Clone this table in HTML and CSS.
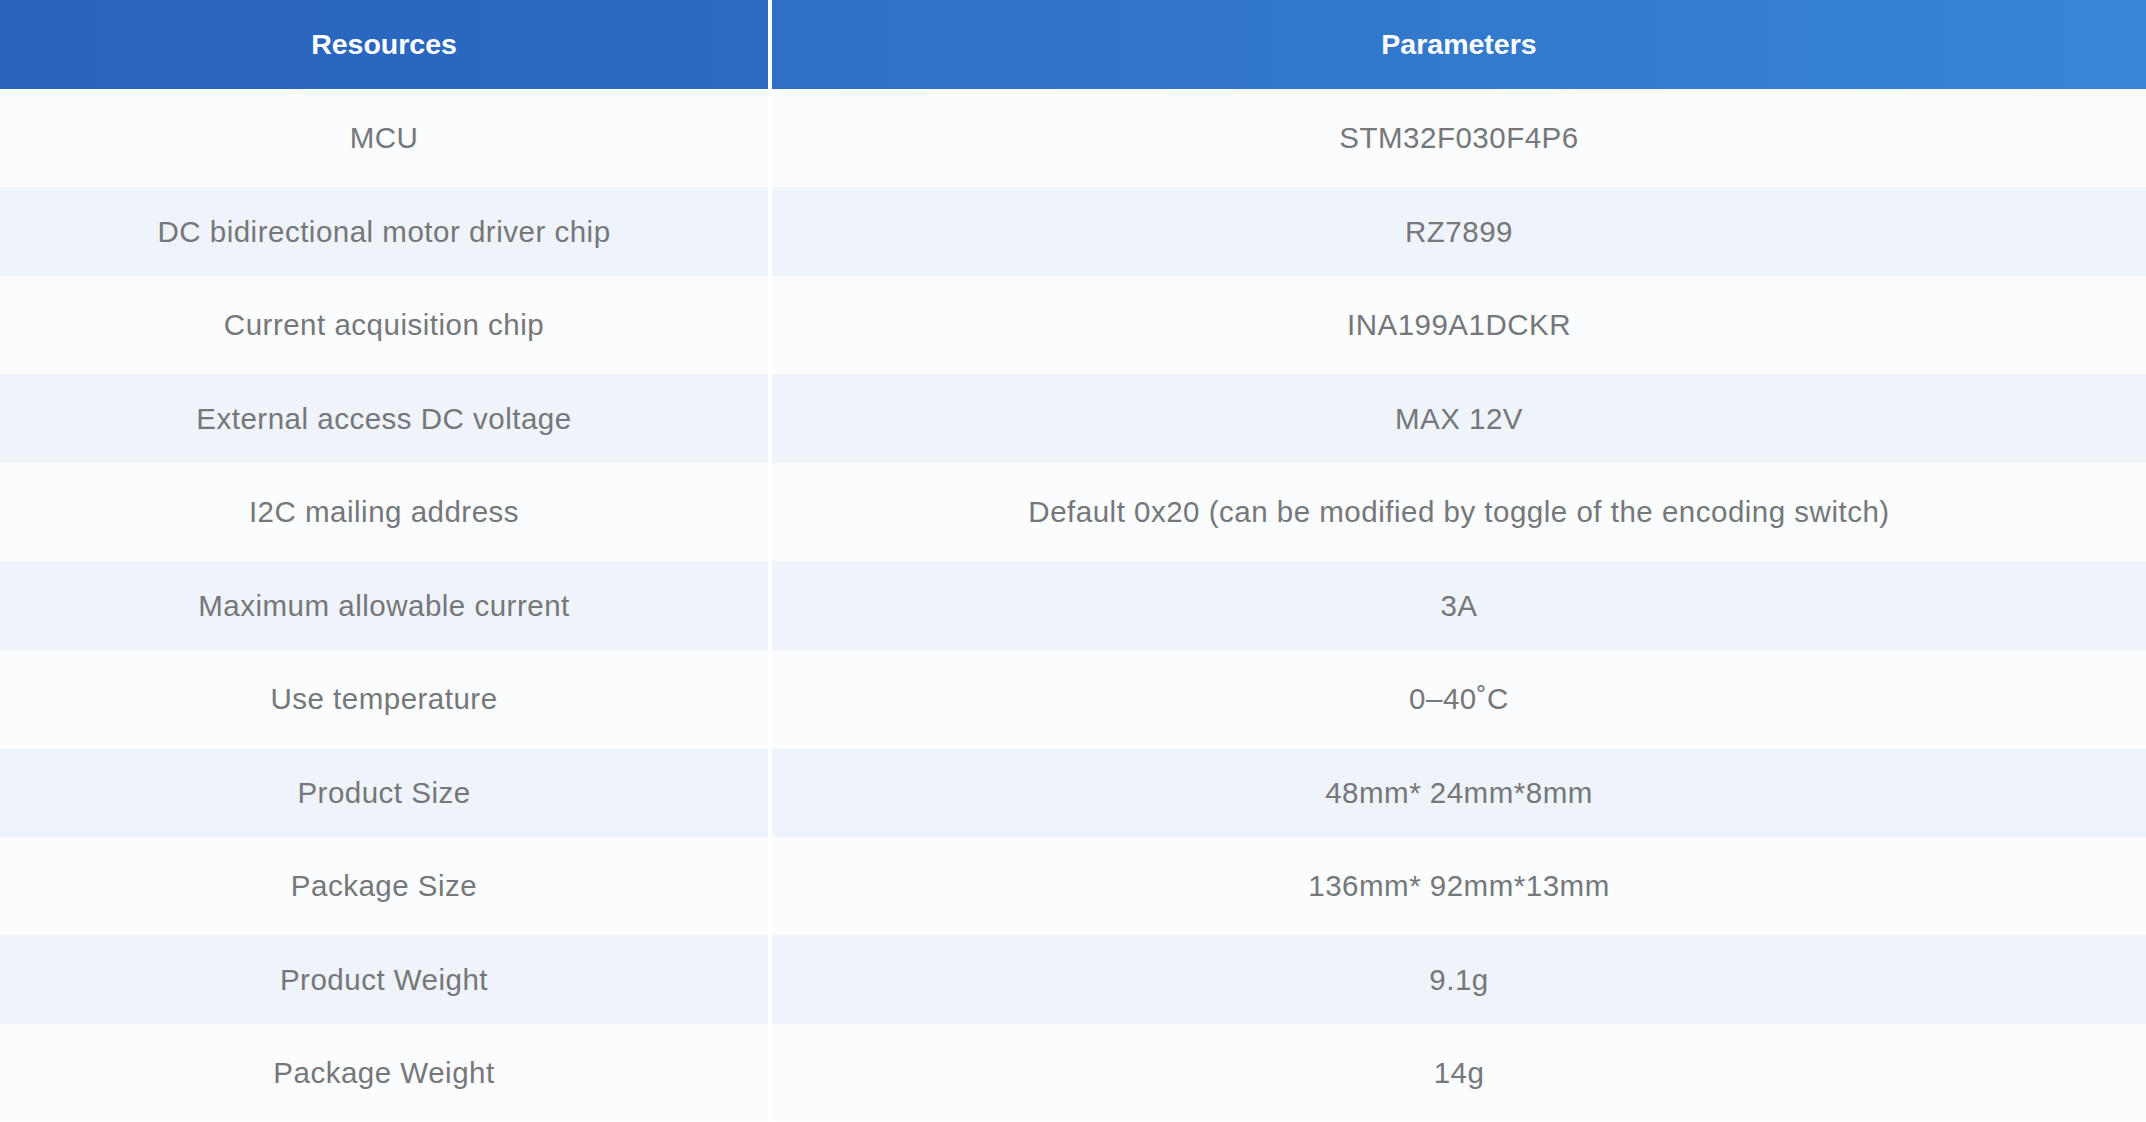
FILE: index.html
```html
<!DOCTYPE html>
<html lang="en">
<head>
<meta charset="utf-8">
<title>Resources and Parameters</title>
<link rel="stylesheet" href="styles.css">
</head>
<body>
<div class="spec">
  <div class="head">
    <div class="cell">Resources</div>
    <div class="cell">Parameters</div>
  </div>
  <div class="row odd"><div class="cell">MCU</div><div class="cell">STM32F030F4P6</div></div>
  <div class="row even"><div class="cell">DC bidirectional motor driver chip</div><div class="cell">RZ7899</div></div>
  <div class="row odd"><div class="cell">Current acquisition chip</div><div class="cell">INA199A1DCKR</div></div>
  <div class="row even"><div class="cell">External access DC voltage</div><div class="cell">MAX 12V</div></div>
  <div class="row odd"><div class="cell">I2C mailing address</div><div class="cell">Default 0x20 (can be modified by toggle of the encoding switch)</div></div>
  <div class="row even"><div class="cell">Maximum allowable current</div><div class="cell">3A</div></div>
  <div class="row odd"><div class="cell">Use temperature</div><div class="cell">0–40˚C</div></div>
  <div class="row even"><div class="cell">Product Size</div><div class="cell">48mm* 24mm*8mm</div></div>
  <div class="row odd"><div class="cell">Package Size</div><div class="cell">136mm* 92mm*13mm</div></div>
  <div class="row even"><div class="cell">Product Weight</div><div class="cell">9.1g</div></div>
  <div class="row odd"><div class="cell">Package Weight</div><div class="cell">14g</div></div>
</div>
</body>
</html>
```
FILE: styles.css
```css
html, body {
  margin: 0;
  padding: 0;
  background: #ffffff;
}

.spec {
  width: 2146px;
  display: flex;
  flex-direction: column;
  font-family: "Liberation Sans", Arial, sans-serif;
}

.head,
.row {
  display: grid;
  grid-template-columns: 768px 1fr;
  column-gap: 4px;
  background: #ffffff;
}

.head {
  height: 89px;
}

.head .cell {
  color: #ffffff;
  font-weight: 700;
  font-size: 28.5px;
}

.head .cell:first-child {
  background: linear-gradient(90deg, #2863bc 0%, #2c6bc3 100%);
}

.head .cell:last-child {
  background: linear-gradient(90deg, #2e70c6 0%, #3278cc 45%, #3985d8 100%);
}

.cell {
  display: flex;
  align-items: center;
  justify-content: center;
  text-align: center;
}

.row .cell {
  color: #75777a;
  font-size: 29.5px;
  letter-spacing: 0.5px;
}

.row.odd {
  height: 97px;
}

.row.even {
  height: 89px;
  border-top: 1px solid #ffffff;
}

.row.odd .cell {
  background: #fbfcfe;
}

.row.even .cell {
  background: #eff3fa;
}
```
